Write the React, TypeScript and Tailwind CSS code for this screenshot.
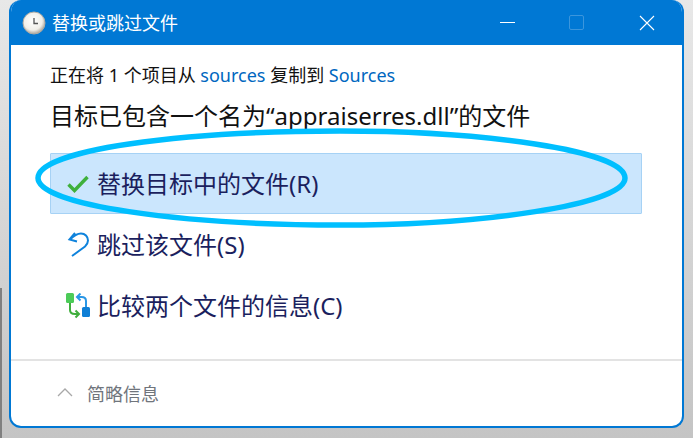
function ClockIcon() {
  return (
    <svg width="24" height="24" viewBox="0 0 24 24" className="shrink-0">
      <defs>
        <radialGradient id="clockFace" cx="45%" cy="40%" r="60%">
          <stop offset="0%" stopColor="#ffffff" />
          <stop offset="70%" stopColor="#f1efe9" />
          <stop offset="100%" stopColor="#a9a49a" />
        </radialGradient>
      </defs>
      <circle cx="12" cy="12" r="11" fill="url(#clockFace)" stroke="#b0aca4" strokeWidth="1" />
      <path d="M12 7V12.5H16" fill="none" stroke="#555555" strokeWidth="1.3" />
    </svg>
  );
}

function CheckIcon() {
  return (
    <svg width="24" height="24" viewBox="0 0 24 24" className="shrink-0">
      <path d="M3.5 12.5L9.5 18.5L22.5 5" fill="none" stroke="#3fb03c" strokeWidth="3.4" />
    </svg>
  );
}

function SkipIcon() {
  return (
    <svg width="24" height="24" viewBox="0 0 24 24" className="shrink-0 overflow-visible">
      <path
        d="M10 0L4.5 6.5L12 8.5M5 6.5C9 2.5 13 0.5 16 0.5C20 0.5 23 3.5 23 7.5C23 10 21.5 12 20 13.5L7 23"
        fill="none"
        stroke="#0f83dc"
        strokeWidth="2"
      />
    </svg>
  );
}

function CompareIcon() {
  return (
    <svg width="26" height="26" viewBox="0 0 26 26" className="shrink-0">
      <rect x="2" y="0" width="8" height="10" rx="1.5" fill="#4ccb58" />
      <rect x="18" y="14" width="8" height="10" rx="1.5" fill="#0f7fd6" />
      <path d="M6 10V17C6 20 8 21 11 21H15M11.5 17.5L15 21L11.5 24.5" fill="none" stroke="#3fae3c" strokeWidth="2" />
      <path d="M22 14V8C22 5.5 20 4 17.5 4H13M16.5 0.5L13 4L16.5 7.5" fill="none" stroke="#2a97e6" strokeWidth="2" />
    </svg>
  );
}

function Option({ icon, label, active }: { icon: React.ReactNode; label: string; active?: boolean }) {
  return (
    <div
      className={`flex h-[61px] items-center rounded-[1px] border pl-[11px] text-[24px] leading-none text-[#1b1f5e] ${
        active ? "border-[#a6d2f5] bg-[#cbe6fd]" : "border-transparent"
      }`}
    >
      <span className="flex w-[35px] justify-center pr-[5px]">{icon}</span>
      <span className="whitespace-nowrap">{label}</span>
    </div>
  );
}

export default function App() {
  return (
    <div
      className="relative flex h-[438px] w-[693px] justify-center overflow-hidden bg-gradient-to-b from-[#e8e8e8] to-[#c4c4c4] pb-[10px]"
      style={{ fontFamily: '"Noto Sans", "Noto Sans CJK SC", sans-serif' }}
    >
      {/* Edge of the window behind */}
      <div className="absolute top-[288px] bottom-0 left-0 w-[2px] bg-[#808080]" />

      <div className="flex h-[428px] w-[675px] flex-col overflow-hidden rounded-[12px] border-x-[2px] border-b-[2px] border-[#0078d4] bg-white">
        {/* Title bar */}
        <div className="flex h-[45px] shrink-0 items-center bg-[#0078d4] pl-[11px] text-white">
          <ClockIcon />
          <span className="ml-[6px] text-[18px] leading-none">替换或跳过文件</span>
          <div className="ml-auto flex items-center">
            <span className="h-[1px] w-[15px] bg-white" />
            <span className="ml-[54px] h-[15px] w-[15px] rounded-[2px] border border-[#3b96dd]" />
            <svg width="16" height="16" viewBox="0 0 16 16" className="mr-[27px] ml-[55px]">
              <path d="M1 1L15 15M15 1L1 15" stroke="white" strokeWidth="1.1" />
            </svg>
          </div>
        </div>

        {/* Content */}
        <div className="flex-1 pl-[39px] pr-[40px]">
          <div className="mt-[17px] text-[18px] leading-[26px] text-[#111111]">
            正在将 1 个项目从 <span className="text-[#0067c0]">sources</span> 复制到{" "}
            <span className="text-[#0067c0]">Sources</span>
          </div>
          <div className="mt-[12px] text-[24px] leading-[32px] text-[#111111]">目标已包含一个名为“appraiserres.dll”的文件</div>
          <div className="mt-[21px]">
            <Option icon={<CheckIcon />} label="替换目标中的文件(R)" active />
            <Option icon={<SkipIcon />} label="跳过该文件(S)" />
            <Option icon={<CompareIcon />} label="比较两个文件的信息(C)" />
          </div>
        </div>

        {/* Footer */}
        <div className="flex h-[67px] shrink-0 items-center border-t-2 border-[#e3e3e3] pl-[46px] pt-[2px] text-[18px] text-[#70757c]">
          <svg width="16" height="9" viewBox="0 0 16 9" className="mb-[4px]">
            <path d="M1 8L8 1L15 8" fill="none" stroke="#a8a8a8" strokeWidth="1.3" />
          </svg>
          <span className="ml-[14px]">简略信息</span>
        </div>
      </div>

      {/* Annotation drawn over the window */}
      <svg width="693" height="438" viewBox="0 0 693 438" className="pointer-events-none absolute top-0 left-0">
        <path
          d="M38 178C38 150 180 131 340 131C480 131 625 150 625 178C625 205 480 225 340 225C180 225 38 205 38 178Z"
          fill="none"
          stroke="#00bfff"
          strokeWidth="5.5"
        />
      </svg>
    </div>
  );
}
